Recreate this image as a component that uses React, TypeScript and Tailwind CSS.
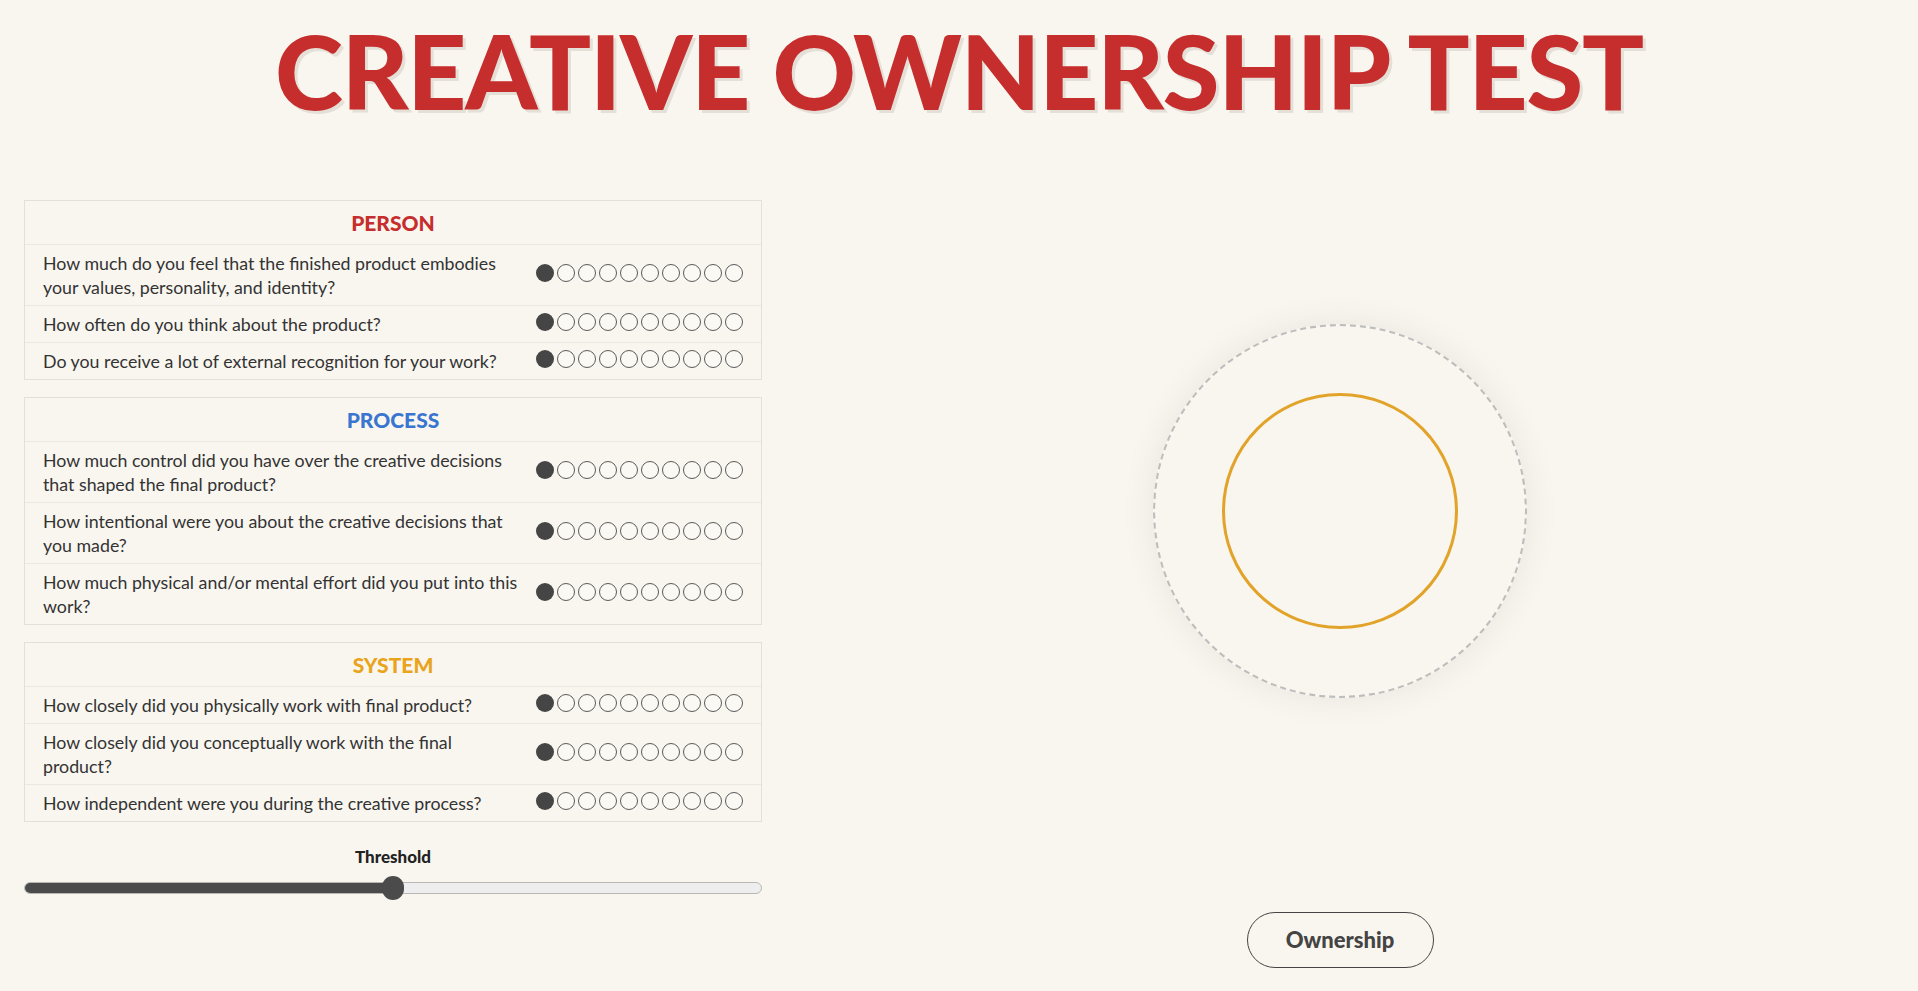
import React from "react";

type Q = { lines: string[] };
type Section = { title: string; color: string; questions: Q[] };

const sections: Section[] = [
  {
    title: "PERSON",
    color: "text-[#c62d2d]",
    questions: [
      { lines: ["How much do you feel that the finished product embodies", "your values, personality, and identity?"] },
      { lines: ["How often do you think about the product?"] },
      { lines: ["Do you receive a lot of external recognition for your work?"] },
    ],
  },
  {
    title: "PROCESS",
    color: "text-[#3a76d0]",
    questions: [
      { lines: ["How much control did you have over the creative decisions", "that shaped the final product?"] },
      { lines: ["How intentional were you about the creative decisions that", "you made?"] },
      { lines: ["How much physical and/or mental effort did you put into this", "work?"] },
    ],
  },
  {
    title: "SYSTEM",
    color: "text-[#e9a41c]",
    questions: [
      { lines: ["How closely did you physically work with final product?"] },
      { lines: ["How closely did you conceptually work with the final", "product?"] },
      { lines: ["How independent were you during the creative process?"] },
    ],
  },
];

function Dots() {
  return (
    <div className="relative -top-[2px] flex shrink-0 gap-[3px] ml-[14px]">
      {Array.from({ length: 10 }).map((_, i) =>
        i === 0 ? (
          <span key={i} className="block w-[18px] h-[18px] rounded-full bg-[#454545]" />
        ) : (
          <span key={i} className="block w-[18px] h-[18px] rounded-full border-[1.5px] border-[#5a5a5a] bg-[#fbf9f4]" />
        )
      )}
    </div>
  );
}

function SectionBox({ s }: { s: Section }) {
  return (
    <div className="border border-[#e4e0d8] bg-[#f9f6f0]">
      <div className={`h-[43px] flex items-center justify-center font-black text-[21px] ${s.color}`}>
        {s.title}
      </div>
      {s.questions.map((q, i) => (
        <div
          key={i}
          className="flex items-center justify-between border-t border-[#ece8e1] px-[18px] py-[6px]"
        >
          <div className="text-[17.8px] leading-[24px] text-[#333333] whitespace-nowrap">
            {q.lines.map((l, j) => (
              <div key={j}>{l}</div>
            ))}
          </div>
          <Dots />
        </div>
      ))}
    </div>
  );
}

export default function App() {
  return (
    <div className="min-h-[991px] w-full bg-[#f9f6ef] font-['Lato',_'Noto_Sans',_sans-serif] text-[#333] overflow-hidden">
      <div className="h-[200px] flex justify-center">
        <h1 className="mt-[14px] text-[103px] leading-[1.1] font-black text-[#c62d2d] tracking-[-1.2px] [text-shadow:3px_3px_0_#e4dfd7]">
          CREATIVE OWNERSHIP TEST
        </h1>
      </div>
      <div className="flex">
        <div className="ml-[24px] w-[738px] shrink-0 flex flex-col gap-[17px]">
          {sections.map((s) => (
            <SectionBox key={s.title} s={s} />
          ))}
          <div className="mt-[6px] flex flex-col items-center">
            <div className="text-[17px] font-black text-[#222] leading-[24px]">Threshold</div>
            <div className="relative w-full h-[24px] mt-[7px] flex items-center">
              <div className="w-full h-[12px] rounded-full border border-[#b8b8b8] bg-[#eeeeee] overflow-hidden">
                <div className="h-full w-1/2 bg-[#4b4b4b]" />
              </div>
              <div className="absolute left-[358px] top-[0px] w-[22px] h-[24px] rounded-full bg-[#4b4b4b]" />
            </div>
          </div>
        </div>
        <div className="flex-1 flex flex-col items-center pt-[124px]">
          <div className="w-[374px] h-[374px] rounded-full border-[2.5px] border-dashed border-[#bdbdbd] shadow-[0_0_36px_rgba(0,0,0,0.07)] flex items-center justify-center">
            <div className="w-[236px] h-[236px] rounded-full border-[3px] border-[#e2a32a]" />
          </div>
          <button className="mt-[214px] w-[187px] h-[56px] rounded-full border border-[#444] text-[22px] font-black text-[#444] leading-none">
            Ownership
          </button>
        </div>
      </div>
    </div>
  );
}
